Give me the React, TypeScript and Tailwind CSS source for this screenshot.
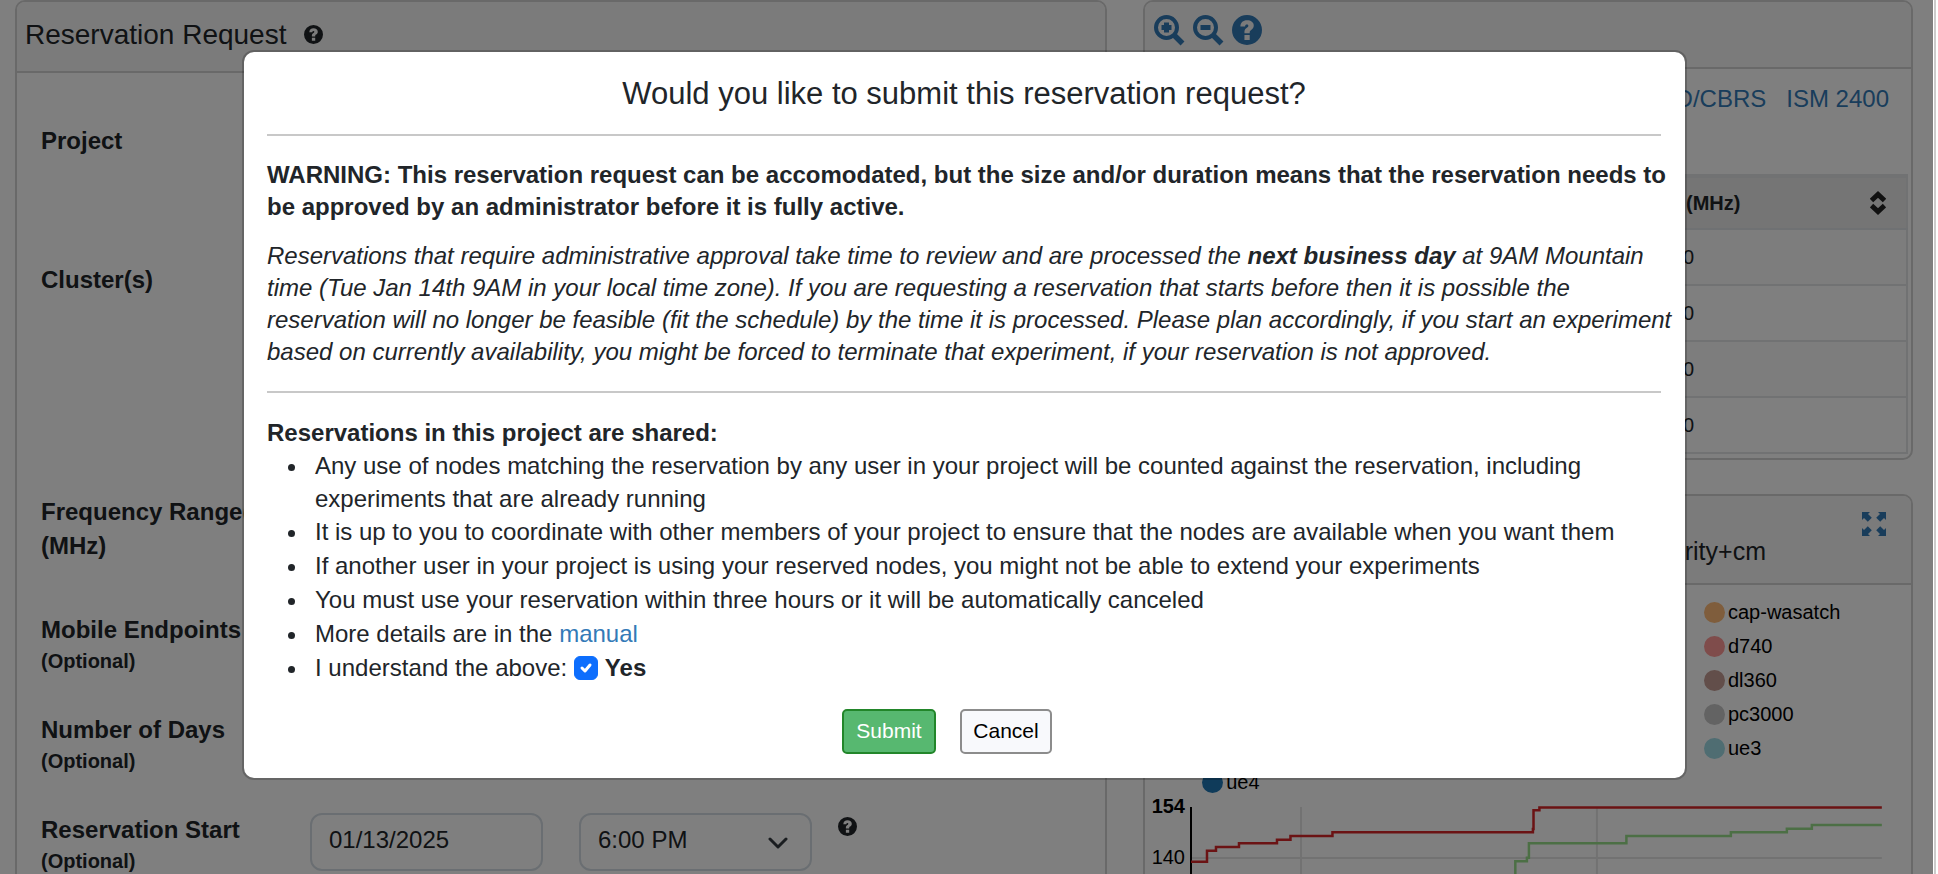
import { useState } from 'react'

const barLinks = ['D/CBRS', 'ISM 2400']

const rows = ['0', '0', '0', '0']

const legend = [
  { name: 'cap-wasatch', color: '#ffbb78' },
  { name: 'd740', color: '#ff9896' },
  { name: 'dl360', color: '#c49c94' },
  { name: 'pc3000', color: '#c7c7c7' },
  { name: 'ue3', color: '#9edae5' },
]

const panel = 'rounded-[10px] border-2 border-[#d2d2d2] bg-white'

function QuestionIcon({ className }: { className?: string }) {
  return (
    <svg className={className} viewBox="0 0 20 20" fill="currentColor" aria-hidden="true">
      <path
        fillRule="evenodd"
        d="M10 0a10 10 0 1 0 0 20a10 10 0 0 0 0-20zM8.3 13.4h3.5v3.2H8.3zM5.6 7.6C5.7 4.9 7.4 3.5 10 3.5c2.600 0 4.500 1.300 4.500 3.500c0 1.500-.8 2.400-1.900 3.100c-.6.4-.8.8-.8 1.400v.6H8.300v-1c0-1.200.7-2 1.600-2.600c.8-.5 1-.8 1-1.300c0-.5-.4-.8-1-.8c-.7 0-1.100.4-1.200 1.200z"
      />
    </svg>
  )
}

function ZoomIcon({ plus }: { plus?: boolean }) {
  return (
    <svg className="h-[31px] w-[31px]" viewBox="0 0 31 31" fill="none" stroke="currentColor" aria-hidden="true">
      <circle cx="12.500" cy="12.500" r="10.500" strokeWidth="4" />
      <path d="M19.500 19.500L28.500 28.500" strokeWidth="5.500" />
      <path d="M7.500 12.500H17.500" strokeWidth="5" />
      {plus && <path d="M12.500 7.500V17.500" strokeWidth="5" />}
    </svg>
  )
}

function ExpandIcon() {
  return (
    <svg className="h-6 w-6" viewBox="0 0 24 24" fill="currentColor" aria-hidden="true">
      <path d="M0 0H8L6 2L9.800 5.800L5.800 9.800L2 6L0 8z" />
      <path d="M24 0V8L22 6L18.200 9.800L14.200 5.800L18 2L16 0z" />
      <path d="M0 24V16L2 18L5.800 14.200L9.800 18.200L6 22L8 24z" />
      <path d="M24 24H16L18 22L14.200 18.200L18.200 14.200L22 18L24 16z" />
    </svg>
  )
}

type RowLabelProps = {
  title: string
  optional?: boolean
  htmlFor?: string
}

function RowLabel(props: RowLabelProps) {
  return (
    <label className="w-[269px] shrink-0 pr-9 font-bold" htmlFor={props.htmlFor}>
      {props.title}
      {props.optional && <span className="block text-[20px] leading-7">(Optional)</span>}
    </label>
  )
}

function RequestForm() {
  return (
    <section className={`col-span-7 ${panel}`}>
      <header className="flex h-[71px] items-center gap-[18px] rounded-t-[8px] border-b-2 border-[#d2d2d2] bg-[#f7f7f7] px-2 pb-1">
        <h2 className="text-[28px] leading-9">Reservation Request</h2>
        <QuestionIcon className="h-[19px] w-[19px]" />
      </header>
      <form className="px-6 pt-[51px]">
        <div className="flex h-[139px]">
          <RowLabel title="Project" />
        </div>
        <div className="flex h-[232px]">
          <RowLabel title="Cluster(s)" />
        </div>
        <div className="flex h-[118px]">
          <RowLabel title="Frequency Range(s) (MHz)" />
        </div>
        <div className="flex h-[100px]">
          <RowLabel title="Mobile Endpoints" optional />
        </div>
        <div className="flex h-[100px]">
          <RowLabel title="Number of Days" optional />
        </div>
        <div className="flex h-[100px] items-start">
          <RowLabel title="Reservation Start" optional htmlFor="startDay" />
          <input
            id="startDay"
            type="text"
            defaultValue="01/13/2025"
            className="h-[58px] w-[233px] rounded-[12px] border-2 border-[#d5dde4] bg-white px-[17px] pb-1"
          />
          <div className="relative ml-9">
            <select
              aria-label="Start hour"
              className="h-[58px] w-[233px] appearance-none rounded-[12px] border-2 border-[#d5dde4] bg-white px-[17px] pb-1"
            >
              <option>6:00 PM</option>
            </select>
            <svg
              className="pointer-events-none absolute right-6 top-6 h-3 w-5"
              viewBox="0 0 20 12"
              fill="none"
              stroke="#343a40"
              strokeWidth="3"
              strokeLinecap="round"
              strokeLinejoin="round"
            >
              <path d="M2 2L10 10L18 2" />
            </svg>
          </div>
          <QuestionIcon className="ml-[26px] mt-1 h-[19px] w-[19px]" />
        </div>
      </form>
    </section>
  )
}

function RangePanel() {
  return (
    <section className={panel}>
      <header className="flex h-[67px] items-start gap-2 rounded-t-[8px] border-b-2 border-[#d2d2d2] bg-[#f7f7f7] px-[9px] pt-[13px] text-[#337ab7]">
        <button type="button" aria-label="Zoom in">
          <ZoomIcon plus />
        </button>
        <button type="button" aria-label="Zoom out">
          <ZoomIcon />
        </button>
        <button type="button" aria-label="Help">
          <QuestionIcon className="h-[30px] w-[30px]" />
        </button>
      </header>
      <nav className="flex justify-end gap-5 pb-[58px] pr-[22px] pt-[13px] text-[#337ab7]">
        {barLinks.map((link) => (
          <a key={link} href="#">
            {link}
          </a>
        ))}
      </nav>
      <div className="px-[3px] pb-1">
        <table className="w-full border-2 border-t-4 border-[#e2e4e6] text-[20px] leading-6">
          <thead className="bg-[#ebebeb]">
            <tr className="h-[53px] border-b-2 border-[#dee2e6]">
              <th />
              <th className="w-[224px] text-left">
                <div className="flex items-center justify-between pl-[3px] pr-5">
                  (MHz)
                  <svg className="h-6 w-4" viewBox="0 0 16 24" fill="none" stroke="#222" strokeWidth="5">
                    <path d="M1.500 9.500L8 3.500L14.500 9.500" />
                    <path d="M1.500 14.500L8 20.500L14.500 14.500" />
                  </svg>
                </div>
              </th>
            </tr>
          </thead>
          <tbody>
            {rows.map((value, index) => (
              <tr key={index} className="h-14 border-b-2 border-[#e2e4e6] odd:bg-[#fafafa]">
                <td />
                <td>{value}</td>
              </tr>
            ))}
          </tbody>
        </table>
      </div>
    </section>
  )
}

function LegendItem({ name, color }: { name: string; color: string }) {
  return (
    <li className="col-start-2 flex h-[34px] items-center gap-[3px]">
      <span className="h-[21px] w-[21px] rounded-full" style={{ backgroundColor: color }} />
      {name}
    </li>
  )
}

function AvailabilityPanel() {
  return (
    <section className={panel}>
      <header className="h-[89px] rounded-t-[8px] border-b-2 border-[#d2d2d2] bg-[#f7f7f7] pt-4">
        <div className="flex h-[22px] justify-end pr-[25px] text-[#337ab7]">
          <button type="button" aria-label="Expand graph" className="h-6">
            <ExpandIcon />
          </button>
        </div>
        <h3 className="pr-[145px] text-right text-[25px]">rity+cm</h3>
      </header>
      <ul className="grid grid-cols-[1fr_207px] pl-[57px] pt-[10px] text-[20px] leading-6 text-black">
        {legend.map((item) => (
          <LegendItem key={item.name} {...item} />
        ))}
        <li className="flex h-[34px] items-center gap-[3px]">
          <span className="h-[21px] w-[21px] rounded-full bg-[#1f77b4]" />
          ue4
        </li>
      </ul>
      <svg className="w-full" viewBox="0 0 766 200" fill="none">
        <g stroke="#e5e5e5" strokeWidth="2">
          <path d="M156 8V200" />
          <path d="M452 8V200" />
          <path d="M46 59H737" />
        </g>
        <path d="M46 8V200" stroke="#000" strokeWidth="2" />
        <path
          d="M1516.400 960V862.300H1528V858.700H1530V844.300H1627.500V837H1732V833.300H1788V829.700H1813V826H1883"
          transform="translate(-1146 -800)"
          stroke="#98df8a"
          strokeWidth="2.500"
        />
        <path
          d="M1192 862.700H1208V851.700H1217V848H1240V844.300H1278V840.700H1291.500V837H1333.500V833.300H1534V830H1534.600V811.300H1540.500V808.500H1883"
          transform="translate(-1146 -800)"
          stroke="#d62728"
          strokeWidth="2.500"
        />
        <g fill="#000" fontSize="20" textAnchor="end">
          <text x="40" y="14" fontWeight="bold">
            154
          </text>
          <text x="40" y="65">
            140
          </text>
        </g>
      </svg>
    </section>
  )
}

function ConfirmModal() {
  const [agreed, setAgreed] = useState(true)

  return (
    <div
      role="dialog"
      aria-modal="true"
      aria-labelledby="confirmTitle"
      className="w-full max-w-[1445px] rounded-[12px] border-2 border-black/20 bg-white bg-clip-padding p-6 pl-[23px]"
    >
      <h2 id="confirmTitle" className="text-center text-[31px] leading-9">
        Would you like to submit this reservation request?
      </h2>
      <hr className="mb-[23px] mt-[22px] border-t-2 border-[#c8c8c8]" />
      <div className="-mr-5 leading-8">
        <p className="font-bold">
          WARNING: This reservation request can be accomodated, but the size and/or duration means that the
          reservation needs to be approved by an administrator before it is fully active.
        </p>
        <p className="mt-[17px] italic">
          Reservations that require administrative approval take time to review and are processed the{' '}
          <b>next business day</b> at 9AM Mountain time (Tue Jan 14th 9AM in your local time zone). If you are
          requesting a reservation that starts before then it is possible the reservation will no longer be feasible
          (fit the schedule) by the time it is processed. Please plan accordingly, if you start an experiment based
          on currently availability, you might be forced to terminate that experiment, if your reservation is not
          approved.
        </p>
      </div>
      <hr className="mb-6 mt-[23px] border-t-2 border-[#c8c8c8]" />
      <p className="font-bold leading-8">Reservations in this project are shared:</p>
      <ul className="list-disc pl-[42px] [&>li]:pl-[6px]">
        <li className="leading-[33px]">
          Any use of nodes matching the reservation by any user in your project will be counted against the
          reservation, including experiments that are already running
        </li>
        <li>
          It is up to you to coordinate with other members of your project to ensure that the nodes are available when
          you want them
        </li>
        <li>
          If another user in your project is using your reserved nodes, you might not be able to extend your
          experiments
        </li>
        <li>You must use your reservation within three hours or it will be automatically canceled</li>
        <li>
          More details are in the{' '}
          <a href="#" className="text-[#337ab7]">
            manual
          </a>
        </li>
        <li>
          I understand the above:{' '}
          <label className="inline-flex items-center gap-[7px] align-top font-bold">
            <span className="relative flex">
              <input
                type="checkbox"
                checked={agreed}
                onChange={(e) => setAgreed(e.target.checked)}
                className="h-6 w-6 appearance-none rounded-[6px] border border-[#0d6efd] checked:bg-[#0d6efd]"
              />
              {agreed && (
                <svg
                  className="pointer-events-none absolute inset-0 h-6 w-6"
                  viewBox="0 0 24 24"
                  fill="none"
                  stroke="#fff"
                  strokeWidth="3"
                  strokeLinecap="round"
                  strokeLinejoin="round"
                >
                  <path d="M8 12L11 15L16 9" />
                </svg>
              )}
            </span>
            Yes
          </label>
        </li>
      </ul>
      <div className="mt-6 flex justify-center gap-6 pr-[34px] text-[21px] leading-7">
        <button
          type="button"
          disabled={!agreed}
          className="h-[45px] w-[94px] rounded-[5px] border-2 border-[#22862a] bg-[#57b870] pb-[2px] text-white"
        >
          Submit
        </button>
        <button
          type="button"
          className="h-[45px] w-[92px] rounded-[5px] border-2 border-[#8c8c8c] bg-[#f8f9fc] pb-[2px] text-black"
        >
          Cancel
        </button>
      </div>
    </div>
  )
}

export default function App() {
  return (
    <div className="h-screen overflow-hidden bg-white pr-[2px] font-['Liberation_Sans',Arial,sans-serif] text-[24px] leading-[34px] text-[#212529]">
      <div className="h-full border-r-2 border-[#ccc] pr-px">
        <div className="relative h-full overflow-hidden">
          <main className="grid grid-cols-12 items-start gap-9 pl-[15px] pr-5">
            <RequestForm />
            <div className="col-span-5 flex flex-col gap-[34px]">
              <RangePanel />
              <AvailabilityPanel />
            </div>
          </main>
          <div className="absolute inset-0 flex items-start justify-center bg-black/50 pr-1 pt-[50px]">
            <ConfirmModal />
          </div>
        </div>
      </div>
    </div>
  )
}
